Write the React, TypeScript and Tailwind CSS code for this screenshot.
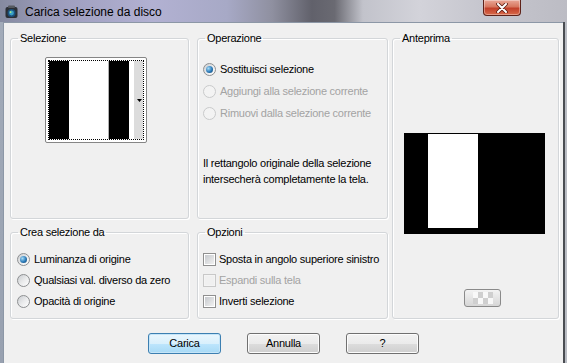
import React from "react";

const font = 'font-["Liberation_Sans",Arial,sans-serif]';

function Radio({ label, checked, disabled }: { label: string; checked?: boolean; disabled?: boolean }) {
    return (
        <div className="flex items-center gap-[4px] h-[14px] whitespace-nowrap">
            <span
                className={`w-[13px] h-[13px] rounded-full border flex items-center justify-center flex-shrink-0 ${disabled
                    ? "border-[#c9cacb] bg-[#f3f3f3]"
                    : "border-[#8d8f91] bg-gradient-to-br from-[#c9ccd0] via-[#e9eaeb] to-[#ffffff]"
                    }`}
            >
                {checked && (
                    <span className="w-[7px] h-[7px] rounded-full bg-[radial-gradient(circle_at_35%_35%,#a6dcf7,#2a79b8_55%,#0f3e66)]" />
                )}
            </span>
            <span className={disabled ? "text-[#a3a3a3]" : "text-black"}>{label}</span>
        </div>
    );
}

function Check({ label, disabled }: { label: string; disabled?: boolean }) {
    return (
        <div className="flex items-center gap-[3px] h-[14px] whitespace-nowrap">
            <span
                className={`w-[13px] h-[13px] border p-[1px] flex-shrink-0 ${disabled ? "border-[#c8c8c8] bg-[#f4f4f4]" : "border-[#8f8f8f] bg-white"
                    }`}
            >
                <span
                    className={`block w-full h-full ${disabled ? "bg-[#f0f0f0]" : "bg-gradient-to-br from-[#c6c9cd] to-[#f1f1f1]"
                        }`}
                />
            </span>
            <span className={disabled ? "text-[#a3a3a3]" : "text-black"}>{label}</span>
        </div>
    );
}

function Group({ title, className, children }: { title: string; className?: string; children?: React.ReactNode }) {
    return (
        <fieldset
            className={`min-w-0 border border-[#d3d6d9] rounded-[3px] shadow-[inset_1px_1px_0_#ffffff,1px_1px_0_#ffffff] ${className ?? ""}`}
        >
            <legend className="ml-[7px] px-[2px] leading-[13px] text-black whitespace-nowrap">{title}</legend>
            {children}
        </fieldset>
    );
}

function Button({ label, primary }: { label: string; primary?: boolean }) {
    return (
        <button
            type="button"
            className={`w-[73px] h-[21px] rounded-[3px] border text-black leading-none ${primary
                ? "border-[#3c7fb1] bg-[linear-gradient(#eaf6fd_0%,#d9f0fc_50%,#bee6fd_50%,#a7d9f5_100%)] shadow-[inset_0_0_0_1px_#c5e5f8]"
                : "border-[#707070] bg-[linear-gradient(#f2f2f2_0%,#ebebeb_50%,#dddddd_50%,#cfcfcf_100%)] shadow-[inset_0_0_0_1px_#fcfcfc]"
                }`}
        >
            {label}
        </button>
    );
}

export default function App() {
    return (
        <div className={`w-[567px] h-[363px] flex flex-col overflow-hidden text-[11px] tracking-[-0.25px] ${font}`}>
            {/* Title bar */}
            <div className="h-[22px] flex items-start bg-[linear-gradient(90deg,#858aa0_0%,#9d9dbd_10%,#b2b1d2_27%,#a7a9c6_40%,#8f90a0_48%,#61616b_55%,#6a6a72_59%,#c2c3cb_64%,#d3d3da_74%,#c6c6ce_85%,#bcbcc4_100%)]">
                <svg width="13" height="14" viewBox="0 0 13 14" className="ml-[5px] mt-[5px]">
                    <rect x="0.5" y="2" width="12" height="11" rx="2" fill="#2b2f35" />
                    <circle cx="6.5" cy="8" r="4" fill="#1c4f7a" />
                    <circle cx="6.5" cy="8" r="2.4" fill="#39a0c8" />
                    <circle cx="5.6" cy="7.1" r="0.9" fill="#b9f07a" />
                    <rect x="3" y="0.5" width="7" height="2.5" rx="1" fill="#55595f" />
                </svg>
                <span className="ml-[7px] mt-[3px] text-[12px] tracking-normal text-black">
                    Carica selezione da disco
                </span>
                <div className="ml-auto mr-[46px] w-[38px] h-[16px] rounded-b-[4px] border border-t-0 border-[#5e2219] bg-[linear-gradient(#e9a797_0%,#d7775f_45%,#c2402a_55%,#d86a4a_100%)] shadow-[inset_0_0_0_1px_rgba(255,255,255,0.35)] flex items-center justify-center">
                    <svg width="12" height="10" viewBox="0 0 12 10">
                        <path d="M2 1 L10 9 M10 1 L2 9" stroke="#5b1d14" strokeWidth="3.6" strokeLinecap="round" />
                        <path d="M2 1 L10 9 M10 1 L2 9" stroke="#ffffff" strokeWidth="2" strokeLinecap="round" />
                    </svg>
                </div>
            </div>

            {/* Body */}
            <div className="flex flex-1">
                <div className="w-[3px] bg-[linear-gradient(#a2abb9,#98a1b0)]" />
                <div className="flex-1 flex flex-col bg-[#f0f0f0] border-l border-t border-[#8c97a6] pl-[6px] pr-[4px] pt-[9px]">
                    <div className="grid grid-cols-[179px_199px_171px] grid-rows-[187px_93px] gap-y-[7px]">
                        <Group title="Selezione" className="col-start-1 row-start-1">
                            <div className="ml-[34px] mt-[12px] w-[102px] h-[86px] border border-[#858585] rounded-[2px] bg-white p-[2px]">
                                <div className="w-full h-full border border-dotted border-black flex">
                                    <div className="w-[20px] bg-black" />
                                    <div className="w-[40px] bg-white border-r border-[#b0b0b0]" />
                                    <div className="w-[20px] bg-black" />
                                    <div className="w-[5px] bg-white" />
                                    <div className="flex-1 bg-[#dcdcdc] flex items-center justify-end pr-[1px]">
                                        <svg width="5" height="3" viewBox="0 0 5 3">
                                            <path d="M0 0 H5 L2.5 3 Z" fill="#000" />
                                        </svg>
                                    </div>
                                </div>
                            </div>
                        </Group>

                        <Group title="Operazione" className="col-start-2 row-start-1 ml-[8px]">
                            <div className="pl-[5px] pt-[17px] flex flex-col gap-[8px]">
                                <Radio label="Sostituisci selezione" checked />
                                <Radio label="Aggiungi alla selezione corrente" disabled />
                                <Radio label="Rimuovi dalla selezione corrente" disabled />
                            </div>
                            <p className="pl-[5px] mt-[35px] leading-[16px] text-black whitespace-nowrap">
                                Il rettangolo originale della selezione
                                <br />
                                intersecherà completamente la tela.
                            </p>
                        </Group>

                        <Group title="Anteprima" className="col-start-3 row-start-1 row-span-2 ml-[4px]">
                            <div className="flex flex-col items-start">
                                <div className="ml-[11px] mt-[88px] w-[141px] h-[101px] bg-black pt-[1px]">
                                    <div className="ml-[24px] w-[50px] h-[94px] bg-white" />
                                </div>
                                <div className="ml-[71px] mt-[55px] w-[37px] h-[18px] rounded-[3px] border border-[#8a8a8a] bg-[linear-gradient(#f3f3f3,#d6d6d6)] flex items-center justify-center">
                                    <div className="grid grid-cols-4 w-[20px] h-[12px]">
                                        <div className="bg-[#f8f8f8]" />
                                        <div className="bg-[#cfcfcf]" />
                                        <div className="bg-[#f8f8f8]" />
                                        <div className="bg-[#cfcfcf]" />
                                        <div className="bg-[#cfcfcf]" />
                                        <div className="bg-[#f8f8f8]" />
                                        <div className="bg-[#cfcfcf]" />
                                        <div className="bg-[#f8f8f8]" />
                                    </div>
                                </div>
                            </div>
                        </Group>

                        <Group title="Crea selezione da" className="col-start-1 row-start-2">
                            <div className="pl-[6px] pt-[13px] flex flex-col gap-[7px]">
                                <Radio label="Luminanza di origine" checked />
                                <Radio label="Qualsiasi val. diverso da zero" />
                                <Radio label="Opacità di origine" />
                            </div>
                        </Group>

                        <Group title="Opzioni" className="col-start-2 row-start-2 ml-[8px]">
                            <div className="pl-[5px] pt-[13px] flex flex-col gap-[7px]">
                                <Check label="Sposta in angolo superiore sinistro" />
                                <Check label="Espandi sulla tela" disabled />
                                <Check label="Inverti selezione" />
                            </div>
                        </Group>
                    </div>

                    <div className="mt-[14px] flex justify-center gap-[26px] pr-[2px]">
                        <Button label="Carica" primary />
                        <Button label="Annulla" />
                        <Button label="?" />
                    </div>
                </div>
                <div className="w-[4px] border-l-2 border-[#4a4d52] bg-[#b9bcc3]" />
            </div>
        </div>
    );
}
